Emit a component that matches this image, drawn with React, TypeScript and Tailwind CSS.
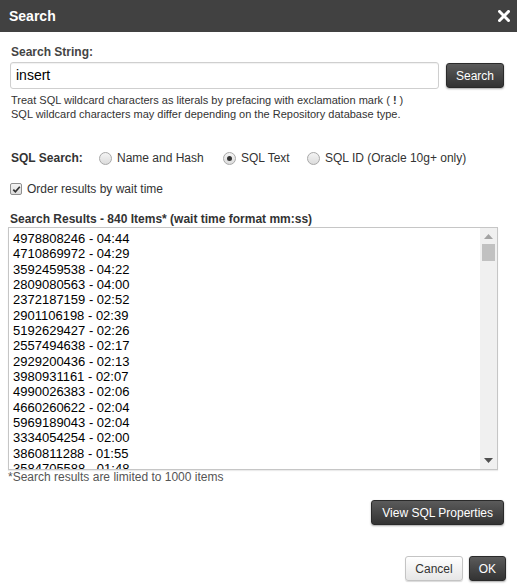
import React from 'react';

const RESULTS = [
  '4978808246 - 04:44',
  '4710869972 - 04:29',
  '3592459538 - 04:22',
  '2809080563 - 04:00',
  '2372187159 - 02:52',
  '2901106198 - 02:39',
  '5192629427 - 02:26',
  '2557494638 - 02:17',
  '2929200436 - 02:13',
  '3980931161 - 02:07',
  '4990026383 - 02:06',
  '4660260622 - 02:04',
  '5969189043 - 02:04',
  '3334054254 - 02:00',
  '3860811288 - 01:55',
  '3584705588 - 01:48',
];

const FONT = { fontFamily: '"Liberation Sans", Arial, sans-serif' };

function Radio({ checked, label }: { checked?: boolean; label: string }) {
  return (
    <label className="flex items-center">
      <span className="flex h-[13px] w-[13px] items-center justify-center rounded-full border border-[#a8a8a8] bg-gradient-to-b from-[#f4f4f4] to-[#dcdcdc]">
        {checked && <span className="h-[5px] w-[5px] rounded-full bg-[#333]" />}
      </span>
      <span className="ml-[5px] text-[12px] text-[#333]">{label}</span>
    </label>
  );
}

export default function App() {
  return (
    <div className="h-[588px] w-[517px] overflow-hidden bg-white text-[#333]" style={FONT}>
      {/* Title bar */}
      <div className="flex h-[32px] items-center justify-between bg-[#414141] pl-[9px] pr-[7px]">
        <span className="text-[14px] font-bold text-white">Search</span>
        <svg width="12" height="12" viewBox="0 0 12 12" className="mb-[1px]">
          <path d="M1.5 1.5 L10.5 10.5 M10.5 1.5 L1.5 10.5" stroke="#fff" strokeWidth="3" strokeLinecap="square" />
        </svg>
      </div>

      <div className="pl-[10px] pr-[13px]">
        <div className="mt-[12px] pl-[1px] text-[12px] font-bold leading-[16px] text-[#444]">Search String:</div>

        <div className="mt-[2px] flex items-center gap-[7px]">
          <div className="flex h-[27px] flex-1 items-center rounded-[3px] border border-[#cfcfcf] px-[5px] text-[14px] text-black shadow-[inset_0_1px_1px_rgba(0,0,0,0.06)]">
            insert
          </div>
          <button className="h-[25px] rounded-[3px] border border-[#2a2a2a] bg-gradient-to-b from-[#5b5b5b] to-[#333] px-[9px] text-[12px] text-white shadow-[0_1px_2px_rgba(0,0,0,0.35)]">
            Search
          </button>
        </div>

        <div className="mt-[4px] pl-[1px] text-[11px] leading-[14px] text-[#333]">
          <div>Treat SQL wildcard characters as literals by prefacing with exclamation mark ( <b>!</b> )</div>
          <div>SQL wildcard characters may differ depending on the Repository database type.</div>
        </div>

        <div className="mt-[29px] flex h-[16px] items-center pl-[1px]">
          <span className="w-[88px] text-[12px] font-bold text-[#333]">SQL Search:</span>
          <div className="w-[124px]"><Radio label="Name and Hash" /></div>
          <div className="w-[84px]"><Radio checked label="SQL Text" /></div>
          <Radio label="SQL ID (Oracle 10g+ only)" />
        </div>

        <div className="mt-[15px] flex h-[16px] items-center">
          <span className="flex h-[12px] w-[12px] items-center justify-center rounded-[2px] border border-[#8f8f8f] bg-gradient-to-b from-[#f4f4f4] to-[#dcdcdc]">
            <svg width="9" height="9" viewBox="0 0 9 9">
              <path d="M1.3 4.6 L3.4 6.8 L7.8 1.8" fill="none" stroke="#333" strokeWidth="1.7" />
            </svg>
          </span>
          <span className="ml-[5px] text-[12px] text-[#333]">Order results by wait time</span>
        </div>

        <div className="mt-[15px] text-[12px] font-bold leading-[14px] text-[#333]">
          Search Results - 840 Items* (wait time format mm:ss)
        </div>
      </div>

      <div className="ml-[8px] mt-[1px] flex h-[243px] w-[490px] border border-[#c6c6c6] shadow-[0_1px_1px_rgba(0,0,0,0.08)]">
        <div className="flex-1 overflow-hidden pl-[4px] pt-[3px] text-[13px] leading-[15.35px] text-black">
          {RESULTS.map((r) => (
            <div key={r}>{r}</div>
          ))}
        </div>
        <div className="flex w-[17px] flex-col items-center bg-[#f0f0f0]">
          <svg width="9" height="5" viewBox="0 0 9 5" className="mt-[6px]">
            <path d="M0 5 L4.5 0 L9 5 Z" fill="#a3a3a3" />
          </svg>
          <div className="mt-[5px] h-[17px] w-[13px] bg-[#c1c1c1]" />
          <div className="flex-1" />
          <svg width="9" height="5" viewBox="0 0 9 5" className="mb-[6px]">
            <path d="M0 0 L9 0 L4.5 5 Z" fill="#505050" />
          </svg>
        </div>
      </div>

      <div className="ml-[8px] text-[12px] leading-[14px] text-[#555]">*Search results are limited to 1000 items</div>

      <div className="mt-[16px] flex justify-end pr-[13px]">
        <button className="h-[25px] rounded-[3px] border border-[#2a2a2a] bg-gradient-to-b from-[#5b5b5b] to-[#333] px-[10px] text-[12px] text-white shadow-[0_1px_2px_rgba(0,0,0,0.35)]">
          View SQL Properties
        </button>
      </div>

      <div className="mt-[31px] flex justify-end gap-[6px] pr-[11px]">
        <button className="h-[25px] rounded-[3px] border border-[#c4c4c4] bg-gradient-to-b from-[#ffffff] to-[#e6e6e6] px-[9px] text-[12px] text-[#333] shadow-[0_1px_1px_rgba(0,0,0,0.15)]">
          Cancel
        </button>
        <button className="h-[25px] rounded-[3px] border border-[#2a2a2a] bg-gradient-to-b from-[#5b5b5b] to-[#333] px-[9px] text-[12px] text-white shadow-[0_1px_2px_rgba(0,0,0,0.35)]">
          OK
        </button>
      </div>
    </div>
  );
}
